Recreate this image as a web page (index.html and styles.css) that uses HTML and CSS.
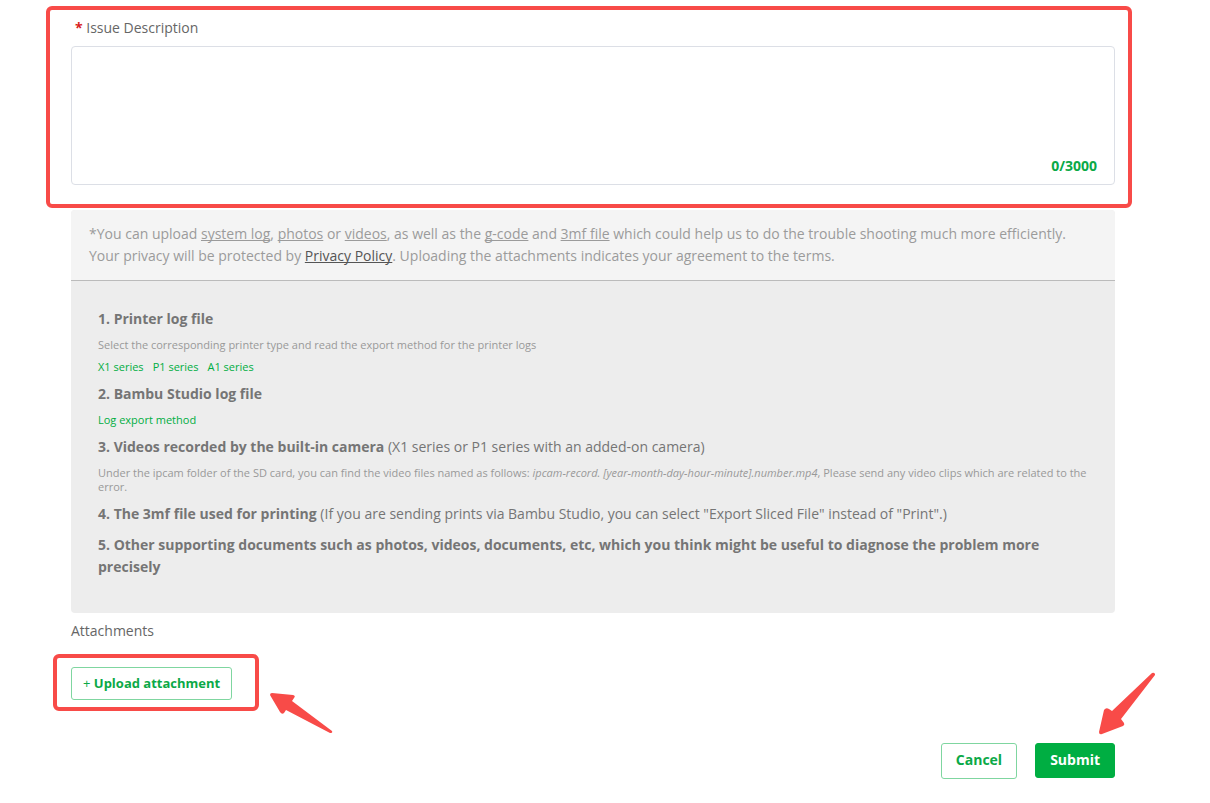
FILE: index.html
```html
<!DOCTYPE html>
<html lang="en">

<head>
    <meta charset="utf-8">
    <meta name="viewport" content="width=device-width, initial-scale=1">
    <title>Submit a ticket</title>
    <link rel="stylesheet" href="styles.css">
</head>

<body>
    <form class="ticket">
        <div class="field marked">
            <label class="label required" for="description">Issue Description</label>
            <div class="textbox">
                <textarea id="description" maxlength="3000"></textarea>
                <span class="counter">0/3000</span>
            </div>
        </div>

        <section class="help">
            <p class="notice">*You can upload <a href="#">system log</a>, <a href="#">photos</a> or <a href="#">videos</a>, as well as the <a href="#">g-code</a> and <a href="#">3mf file</a> which could help us to do the trouble shooting much more efficiently. Your privacy will be protected by <a class="policy" href="#">Privacy Policy</a>. Uploading the attachments indicates your agreement to the terms.</p>
            <div class="files">
                <div class="item">
                    <p><b>1. Printer log file</b></p>
                    <p class="hint">Select the corresponding printer type and read the export method for the printer logs</p>
                    <div class="links">
                        <a href="#">X1 series</a>
                        <a href="#">P1 series</a>
                        <a href="#">A1 series</a>
                    </div>
                </div>
                <div class="item">
                    <p><b>2. Bambu Studio log file</b></p>
                    <div class="links"><a href="#">Log export method</a></div>
                </div>
                <div class="item">
                    <p><b>3. Videos recorded by the built-in camera</b> (X1 series or P1 series with an added-on camera)</p>
                    <p class="hint">Under the ipcam folder of the SD card, you can find the video files named as follows: <i>ipcam-record. [year-month-day-hour-minute].number.mp4</i>, Please send any video clips which are related to the error.</p>
                </div>
                <div class="item">
                    <p><b>4. The 3mf file used for printing</b> (If you are sending prints via Bambu Studio, you can select "Export Sliced File" instead of "Print".)</p>
                </div>
                <div class="item">
                    <p><b>5. Other supporting documents such as photos, videos, documents, etc, which you think might be useful to diagnose the problem more precisely</b></p>
                </div>
            </div>
        </section>

        <div class="attachments">
            <span class="label">Attachments</span>
            <div class="upload marked">
                <button type="button" class="btn btn-upload"><span class="plus">+</span> Upload attachment</button>
                <svg class="arrow arrow-upload" width="64" height="42" viewBox="0 0 64 42">
                    <path d="M2 1 L23 3 Q26 4 24 6 L22 9 L62 39 Q63 41 60 41 L16 18 L14 21 Q12 23 10 20 L0 3 Q0 1 2 1Z" />
                </svg>
            </div>
        </div>

        <div class="actions">
            <button type="button" class="btn">Cancel</button>
            <div class="submit">
                <button type="submit" class="btn btn-primary">Submit</button>
                <svg class="arrow arrow-submit" width="57" height="63" viewBox="0 0 57 63">
                    <path d="M53 1 Q55 0 56 2 L56 3 L22 47 L25 51 Q26 53 24 54 L3 62 Q0 63 0 60 L5 38 Q7 35 10 37 L13 39Z" />
                </svg>
            </div>
        </div>
    </form>
</body>

</html>
```
FILE: styles.css
```css
* {
    box-sizing: border-box;
}

body {
    margin: 0;
    background: #fff;
    color: #666;
    font-family: "Open Sans", "Noto Sans", sans-serif;
    font-size: 14px;
    line-height: 22px;
}

p {
    margin: 0;
}

.ticket {
    padding: 17px 95px 24px 71px;
}

.label {
    display: block;
}

.required {
    padding-left: 4px;
}

.required::before {
    content: "* ";
    color: #d81e1e;
    font-weight: bold;
}

/* red frames */
.marked {
    position: relative;
}

.marked::after {
    content: "";
    position: absolute;
    border: 4px solid #f84b48;
    border-radius: 6px;
    pointer-events: none;
}

.field::after {
    inset: -11px -17px -23px -25px;
}

.textbox {
    position: relative;
    margin-top: 7px;
}

textarea {
    display: block;
    width: 100%;
    height: 139px;
    padding: 8px 16px;
    border: 1px solid #dcdfe6;
    border-radius: 4px;
    font: inherit;
    color: inherit;
    resize: none;
    outline: none;
}

.counter {
    position: absolute;
    right: 18px;
    bottom: 8px;
    color: #0ba947;
    font-weight: bold;
}

.help {
    margin-top: 25px;
    border-radius: 4px;
    background: #ededed;
    overflow: hidden;
}

.notice {
    padding: 13px 18px;
    border-bottom: 1px solid #bbb;
    background: #f4f4f4;
    color: #9b9b9b;
}

.notice a {
    color: inherit;
    text-decoration-skip-ink: none;
}

.notice .policy {
    color: #555;
}

.files {
    display: grid;
    gap: 9px;
    padding: 27px 27px 35px;
    color: #757575;
}

.item {
    display: grid;
    gap: 8px;
}

.hint,
.links {
    color: #999;
    font-size: 11px;
    line-height: 14px;
}

.links {
    display: flex;
    gap: 9px;
}

.links a {
    color: #00ae42;
    text-decoration: none;
}

.attachments {
    margin-top: 7px;
}

.upload {
    width: fit-content;
    margin-top: 25px;
}

.upload::after {
    inset: -13px -27px -11px -18px;
}

.btn {
    display: block;
    height: 36px;
    padding: 0 14px 2px;
    border: 1px solid #7fd6a0;
    border-radius: 3px;
    background: #fff;
    color: #0ba947;
    font: bold 14px/22px "Open Sans", "Noto Sans", sans-serif;
    cursor: pointer;
}

.btn-upload {
    height: 33px;
    padding: 0 11px 1px;
    font-size: 13px;
}

.plus {
    font-weight: normal;
}

.btn-primary {
    height: 35px;
    border-color: #00ae42;
    background: #00ae42;
    color: #fff;
}

.actions {
    display: flex;
    justify-content: flex-end;
    gap: 18px;
    margin-top: 43px;
}

.submit {
    position: relative;
}

.arrow {
    position: absolute;
    fill: #f84b48;
}

.arrow-upload {
    left: 199px;
    top: 25px;
}

.arrow-submit {
    right: -41px;
    top: -71px;
}
```
